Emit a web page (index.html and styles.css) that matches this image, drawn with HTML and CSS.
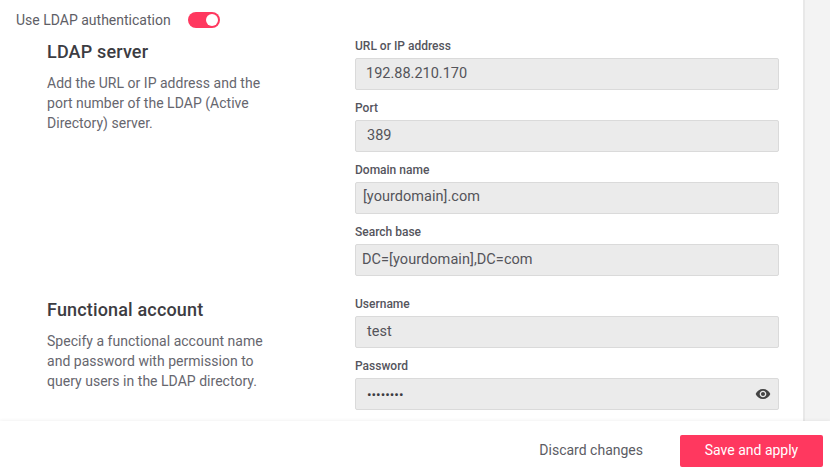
FILE: index.html
```html
<!DOCTYPE html>
<html lang="en">
<head>
<meta charset="utf-8">
<title>LDAP settings</title>
<link rel="stylesheet" href="styles.css">
</head>
<body>
<div class="page">
  <div class="body">
    <main class="content">
      <div class="toggle-row">
        <span class="toggle-label">Use LDAP authentication</span>
        <span class="toggle"><span class="knob"></span></span>
      </div>
      <section class="section">
        <div class="intro">
          <h2>LDAP server</h2>
          <p>Add the URL or IP address and the port number of the LDAP (Active Directory) server.</p>
        </div>
        <div class="fields">
          <div class="field"><label>URL or IP address</label><div class="input">192.88.210.170</div></div>
          <div class="field"><label>Port</label><div class="input wide-pad">389</div></div>
          <div class="field"><label>Domain name</label><div class="input tight raised">[yourdomain].com</div></div>
          <div class="field"><label>Search base</label><div class="input tight flush">DC=[yourdomain],DC=com</div></div>
        </div>
      </section>
      <section class="section">
        <div class="intro">
          <h2>Functional account</h2>
          <p>Specify a functional account name and password with permission to query users in the LDAP directory.</p>
        </div>
        <div class="fields">
          <div class="field"><label>Username</label><div class="input wide-pad">test</div></div>
          <div class="field"><label>Password</label>
            <div class="input password"><span class="dots">••••••••</span>
              <svg class="eye" viewBox="0 0 24 24" width="16" height="16"><path fill="#444" d="M12 4.5C7 4.5 2.73 7.61 1 12c1.73 4.39 6 7.5 11 7.5s9.27-3.11 11-7.5c-1.73-4.39-6-7.5-11-7.5zM12 17c-2.76 0-5-2.24-5-5s2.24-5 5-5 5 2.24 5 5-2.24 5-5 5zm0-8c-1.66 0-3 1.34-3 3s1.34 3 3 3 3-1.34 3-3-1.34-3-3-3z"/></svg>
            </div>
          </div>
        </div>
      </section>
    </main>
    <aside class="rail"></aside>
  </div>
  <footer class="footer">
    <button class="discard" type="button">Discard changes</button>
    <button class="save" type="button">Save and apply</button>
  </footer>
</div>
</body>
</html>
```
FILE: styles.css
```css
* { box-sizing: border-box; }
html, body { margin: 0; height: 100%; overflow: hidden; background: #fff; }
body { font-family: Roboto, "Liberation Sans", sans-serif; color: #5c5c64; }
.page { display: flex; flex-direction: column; height: 473px; }
.body { flex: 1; display: flex; min-height: 0; }
.content { flex: 1; min-width: 0; padding: 10px 24px 0 16px; }
.rail { width: 27px; background: #f3f3f3; border-left: 2px solid #e8e8e8; }
.toggle-row { display: flex; align-items: center; height: 20px; }
.toggle-label { font-size: 14px; line-height: 20px; width: 172px; color: #5e5e66; }
.toggle { width: 32px; height: 16px; border-radius: 8px; background: #ff385f; display: flex; justify-content: flex-end; align-items: center; padding-right: 2px; }
.knob { width: 12px; height: 12px; border-radius: 50%; background: #fff; }
.section { display: flex; margin-top: 8px; padding-left: 31px; }
.section + .section { margin-top: 10px; }
.intro { width: 308px; flex: none; padding-top: 2px; }
.intro h2 { margin: 0 0 9px; font-size: 18px; line-height: 24px; font-weight: 500; letter-spacing: 0.16px; color: #3c3c42; }
.intro p { margin: 0; width: 225px; font-size: 14px; line-height: 20px; letter-spacing: 0.02px; color: #66666e; }
.fields { flex: 1; min-width: 0; }
.field { margin-bottom: 10px; }
.field label { display: block; font-size: 12px; line-height: 16px; font-weight: 500; color: #55555d; margin-bottom: 4px; }
.input { height: 32px; background: #ebebeb; border: 1px solid #dadada; border-radius: 2px; padding: 0 10px; font-size: 14.5px; line-height: 30px; color: #54545a; }
.input.wide-pad { padding-left: 11px; }
.input.tight { padding-left: 7px; letter-spacing: 0.03px; }
.input.raised { line-height: 28px; }
.input.flush { padding-left: 6px; letter-spacing: 0.06px; }
.password { display: flex; align-items: center; justify-content: space-between; padding-right: 7px; }
.dots { font-size: 13.5px; color: #3c3c42; padding-left: 1px; }
.eye { display: block; }
.footer { height: 52px; flex: none; display: flex; justify-content: flex-end; align-items: flex-start; gap: 37px; padding: 14px 7px 0 0; background: #fff; box-shadow: 0 -1px 3px rgba(0,0,0,.05); position: relative; }
.footer button { font-family: inherit; font-size: 14px; height: 32px; border: 0; padding: 0 0 2px; cursor: pointer; }
.discard { background: none; color: #5c5c64; }
.save { width: 143px; background: #ff385f; color: #fff; border-radius: 2px; }
```
